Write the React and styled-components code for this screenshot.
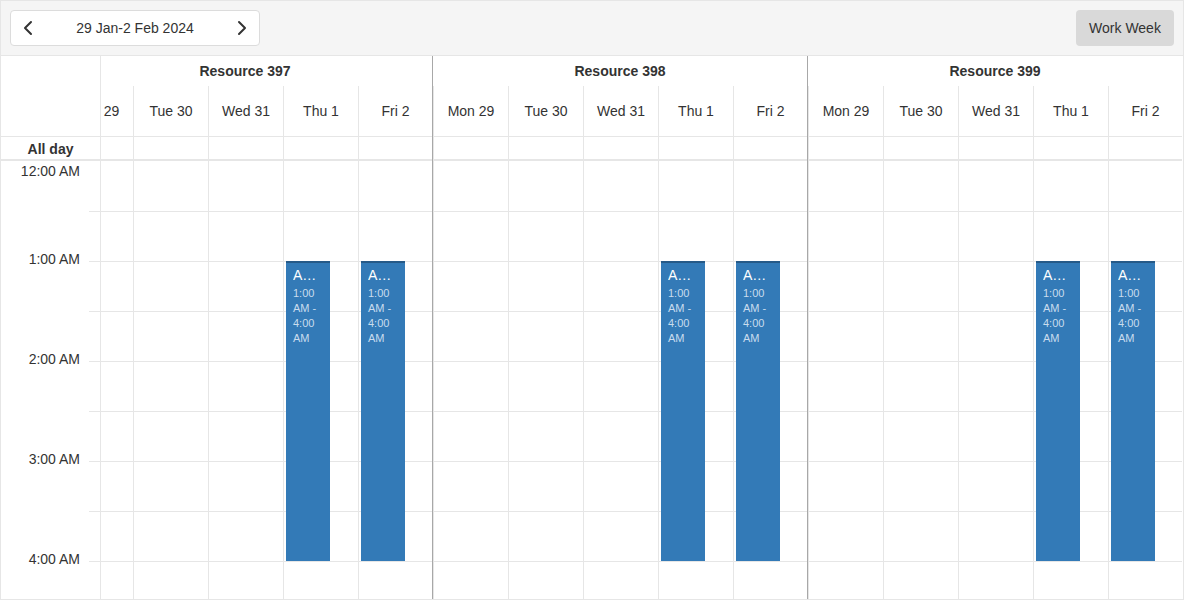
import React from "react";
import styled, { createGlobalStyle } from "styled-components";
import { ChevronLeft, ChevronRight } from "lucide-react";

const GlobalStyle = createGlobalStyle`
	html, body {
		margin: 0;
		padding: 0;
		background: #fff;
	}
	body {
		font-family: "Liberation Sans", Arial, sans-serif;
		color: #333;
	}
	* {
		box-sizing: border-box;
	}
`;

const LINE = "#e6e6e6";
const GROUP_LINE = "#a8a8a8";

const Scheduler = styled.div`
	width: 1184px;
	height: 600px;
	border: 1px solid ${LINE};
	overflow: hidden;
	display: flex;
	flex-direction: column;
`;

const Toolbar = styled.div`
	height: 55px;
	flex: none;
	background: #f5f5f5;
	border-bottom: 1px solid ${LINE};
	display: flex;
	align-items: center;
	justify-content: space-between;
	padding: 0 9px;
`;

const DateNav = styled.div`
	width: 250px;
	height: 36px;
	background: #fff;
	border: 1px solid #dcdcdc;
	border-radius: 4px;
	display: flex;
	align-items: center;
`;

const NavButton = styled.button`
	width: 34px;
	height: 34px;
	border: 0;
	background: transparent;
	padding: 0;
	display: flex;
	align-items: center;
	justify-content: center;
	color: #333;
	cursor: pointer;
`;

const DateLabel = styled.div`
	flex: 1;
	text-align: center;
	font-size: 14px;
	color: #333;
`;

const ViewButton = styled.button`
	width: 98px;
	height: 36px;
	border: 0;
	border-radius: 4px;
	background: #d9d9d9;
	font-family: "Liberation Sans", Arial, sans-serif;
	font-size: 14px;
	color: #333;
	padding: 0;
`;

const Main = styled.div`
	flex: 1;
	display: flex;
	min-height: 0;
`;

const Side = styled.div`
	width: 100px;
	flex: none;
	border-right: 1px solid ${LINE};
	display: flex;
	flex-direction: column;
`;

const SideHead = styled.div`
	height: 81px;
	flex: none;
	border-bottom: 1px solid ${LINE};
`;

const AllDayLabel = styled.div`
	height: 24px;
	flex: none;
	border-bottom: 2px solid ${LINE};
	padding-top: 1px;
	font-size: 14px;
	font-weight: bold;
	text-align: center;
	line-height: 22px;
`;

const TimeSlot = styled.div`
	height: 50px;
	flex: none;
	display: flex;
	flex-direction: column;
	justify-content: ${(p) => (p.$top ? "flex-start" : "flex-end")};
	background: ${(p) =>
		p.$first ? "none" : `linear-gradient(${LINE}, ${LINE}) right top / 11px 1px no-repeat`};
`;

const TimeText = styled.div`
	font-size: 14px;
	line-height: 16px;
	text-align: right;
	padding-right: 20px;
	margin-top: ${(p) => (p.$top ? "2px" : "0")};
	margin-bottom: ${(p) => (p.$top ? "0" : "-6px")};
	white-space: nowrap;
`;

const Viewport = styled.div`
	flex: 1;
	overflow: hidden;
`;

const Track = styled.div`
	display: flex;
	margin-left: -44px;
	width: max-content;
`;

const Group = styled.div`
	width: 375px;
	flex: none;
	border-left: 1px solid ${GROUP_LINE};
	display: flex;
	flex-direction: column;
`;

const GroupTitle = styled.div`
	height: 30px;
	flex: none;
	line-height: 30px;
	text-align: center;
	font-size: 14px;
	font-weight: bold;
	color: #333;
`;

const Row = styled.div`
	display: flex;
	flex: none;
`;

const DayHead = styled.div`
	width: 75px;
	height: 51px;
	flex: none;
	border-left: 1px solid ${LINE};
	border-bottom: 1px solid ${LINE};
	padding-top: 1px;
	font-size: 14px;
	line-height: 49px;
	text-align: center;
	white-space: nowrap;
	&:last-child {
		width: 74px;
	}
`;

const AllDayCell = styled.div`
	width: 75px;
	height: 24px;
	flex: none;
	border-left: 1px solid ${LINE};
	border-bottom: 2px solid ${LINE};
	&:last-child {
		width: 74px;
	}
`;

const DayColumn = styled.div`
	width: 75px;
	flex: none;
	position: relative;
	border-left: 1px solid ${LINE};
	display: flex;
	flex-direction: column;
	&:last-child {
		width: 74px;
	}
`;

const Slot = styled.div`
	height: 50px;
	flex: none;
	border-top: ${(p) => (p.$first ? "none" : `1px solid ${LINE}`)};
`;

const Event = styled.div`
	position: absolute;
	left: 2px;
	top: 100px;
	width: 44px;
	height: 300px;
	background: #337ab7;
	border-top: 2px solid #265a88;
	padding: 4px 7px 0;
	overflow: hidden;
`;

const EventTitle = styled.div`
	font-size: 14px;
	line-height: 16px;
	color: #fff;
	white-space: nowrap;
	overflow: hidden;
	text-overflow: ellipsis;
`;

const EventTime = styled.div`
	margin-top: 3px;
	font-size: 11px;
	line-height: 15px;
	color: #c9dcee;
`;

const resources = ["Resource 397", "Resource 398", "Resource 399"];
const days = ["Mon 29", "Tue 30", "Wed 31", "Thu 1", "Fri 2"];
const busyDays = ["Thu 1", "Fri 2"];
const SLOTS = 9;
const hours = ["12:00 AM", "1:00 AM", "2:00 AM", "3:00 AM", "4:00 AM"];

const timeLabelFor = (i) => {
	if (i === 0) return hours[0];
	if (i % 2 === 1) return hours[(i + 1) / 2];
	return null;
};

const App = () => {
	return (
		<>
			<GlobalStyle />
			<Scheduler>
				<Toolbar>
					<DateNav>
						<NavButton aria-label="Previous">
							<ChevronLeft size={24} strokeWidth={2} />
						</NavButton>
						<DateLabel>29 Jan-2 Feb 2024</DateLabel>
						<NavButton aria-label="Next">
							<ChevronRight size={24} strokeWidth={2} />
						</NavButton>
					</DateNav>
					<ViewButton>Work Week</ViewButton>
				</Toolbar>
				<Main>
					<Side>
						<SideHead />
						<AllDayLabel>All day</AllDayLabel>
						{Array.from({ length: SLOTS }).map((_, i) => {
							const label = timeLabelFor(i);
							return (
								<TimeSlot key={i} $first={i === 0} $top={i === 0}>
									{label && <TimeText $top={i === 0}>{label}</TimeText>}
								</TimeSlot>
							);
						})}
					</Side>
					<Viewport>
						<Track>
							{resources.map((res) => (
								<Group key={res}>
									<GroupTitle>{res}</GroupTitle>
									<Row>
										{days.map((d) => (
											<DayHead key={d}>{d}</DayHead>
										))}
									</Row>
									<Row>
										{days.map((d) => (
											<AllDayCell key={d} />
										))}
									</Row>
									<Row>
										{days.map((d) => (
											<DayColumn key={d}>
												{Array.from({ length: SLOTS }).map((_, i) => (
													<Slot key={i} $first={i === 0} />
												))}
												{busyDays.includes(d) && (
													<Event>
														<EventTitle>Appointment</EventTitle>
														<EventTime>1:00 AM - 4:00 AM</EventTime>
													</Event>
												)}
											</DayColumn>
										))}
									</Row>
								</Group>
							))}
						</Track>
					</Viewport>
				</Main>
			</Scheduler>
		</>
	);
};

export default App;
